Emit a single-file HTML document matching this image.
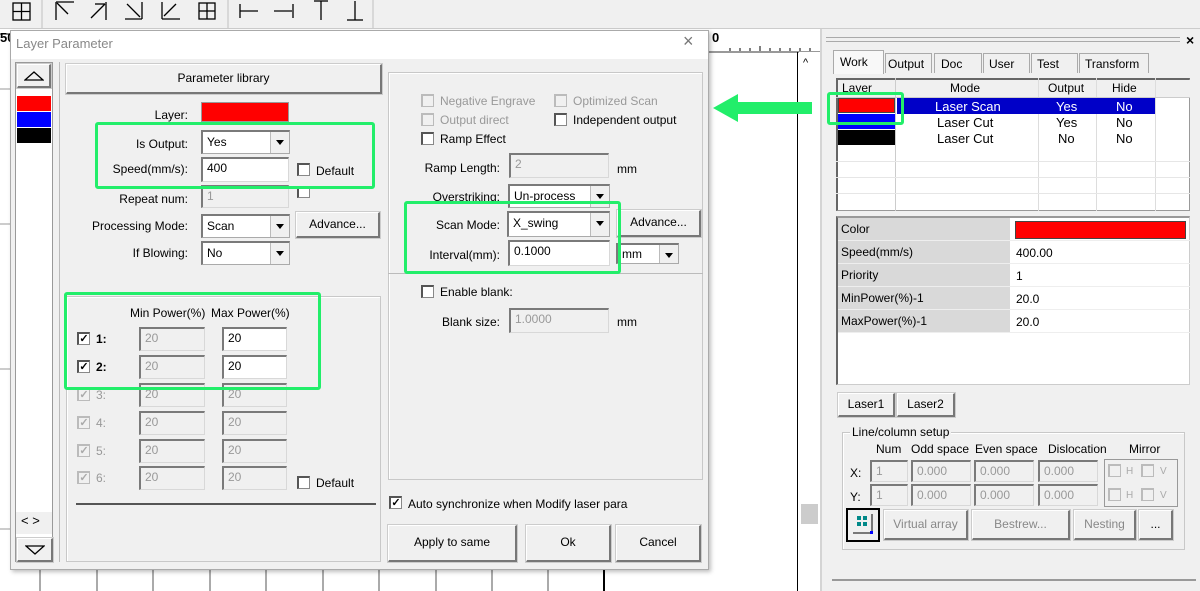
<!DOCTYPE html>
<html><head><meta charset="utf-8"><style>
*{box-sizing:border-box;margin:0;padding:0}
body{width:1200px;height:591px;overflow:hidden;position:relative;background:#fff;font-family:"Liberation Sans",sans-serif;font-size:12px;color:#000}
.a{position:absolute}
.t{position:absolute;white-space:nowrap;line-height:14px}
.r{text-align:right}
.in{position:absolute;background:#fff;border:1px solid #d8d8d8;border-top:2px solid #7a7a7a;border-left:2px solid #7a7a7a;padding:2px 4px;line-height:14px;white-space:nowrap}
.dis{background:#f0f0f0;color:#999}
.btn{position:absolute;background:#f0f0f0;border:1px solid #fff;border-right:2px solid #777;border-bottom:2px solid #777;text-align:center;white-space:nowrap;outline:1px solid #ccc}
.dd{position:absolute;background:#fff;border:1px solid #aaa;border-top:2px solid #7a7a7a;border-left:2px solid #7a7a7a;padding:2px 4px;line-height:16px}
.dd:after{content:"";position:absolute;right:0;top:0;bottom:0;width:18px;border-left:1px solid #bbb;background:#f0f0f0}
.dd i{position:absolute;right:5px;top:8px;width:0;height:0;border-left:4px solid transparent;border-right:4px solid transparent;border-top:5px solid #000;z-index:2}
.cb{position:absolute;width:13px;height:13px;background:#fff;border:1px solid #888;border-top:2px solid #555;border-left:2px solid #555;font-size:11px;line-height:10px;text-align:center;font-weight:bold}
.cbd{background:#f0f0f0;border-color:#bbb;color:#aaa}
.grn{position:absolute;border:3px solid #22ee6a;border-radius:3px}
.grp{position:absolute;border:1px solid #c8c8c8;box-shadow:1px 1px 0 #fff inset}
</style></head><body>
<!-- toolbar -->
<div class="a" style="left:0;top:0;width:1200px;height:29px;background:#f0f0f0;border-bottom:1px solid #ccc"></div>
<svg class="a" style="left:0;top:0" width="400" height="28" stroke="#000" fill="none" stroke-width="1.3">
<rect x="13" y="3" width="17" height="17"/><line x1="21.5" y1="3" x2="21.5" y2="20"/><line x1="13" y1="11.5" x2="30" y2="11.5"/>
<line x1="42" y1="0" x2="42" y2="28" stroke="#ccc"/>
<line x1="56" y1="2" x2="56" y2="20"/><line x1="56" y1="2" x2="74" y2="2"/><line x1="57" y1="3" x2="68" y2="14"/>
<line x1="91" y1="18" x2="105" y2="4"/><line x1="106" y1="2" x2="106" y2="20"/><line x1="95" y1="4" x2="105" y2="4"/>
<line x1="127" y1="4" x2="140" y2="17"/><line x1="142" y1="2" x2="142" y2="19"/><line x1="125" y1="19" x2="142" y2="19"/>
<line x1="176" y1="4" x2="164" y2="16"/><line x1="162" y1="2" x2="162" y2="19"/><line x1="162" y1="19" x2="180" y2="19"/>
<rect x="199" y="3" width="16" height="16"/><line x1="207" y1="3" x2="207" y2="19"/><line x1="199" y1="11" x2="215" y2="11"/>
<line x1="228" y1="0" x2="228" y2="28" stroke="#ccc"/>
<line x1="240" y1="4" x2="240" y2="18"/><line x1="240" y1="11" x2="258" y2="11"/>
<line x1="274" y1="11" x2="292" y2="11"/><line x1="293" y1="4" x2="293" y2="18"/>
<line x1="314" y1="1" x2="328" y2="1"/><line x1="321" y1="1" x2="321" y2="20"/>
<line x1="355" y1="1" x2="355" y2="20"/><line x1="347" y1="20" x2="363" y2="20"/>
<line x1="373" y1="0" x2="373" y2="28" stroke="#ccc"/>
</svg>
<!-- canvas grid -->
<svg class="a" style="left:0;top:29px" width="822" height="562" stroke="#999" stroke-width="1">
<line x1="0" y1="60" x2="10" y2="60"/><line x1="0" y1="195" x2="10" y2="195"/><line x1="0" y1="340" x2="10" y2="340"/><line x1="0" y1="500" x2="10" y2="500"/>
<g stroke="#555"><line x1="40" y1="540" x2="40" y2="562"/><line x1="97" y1="540" x2="97" y2="562"/><line x1="153" y1="540" x2="153" y2="562"/><line x1="210" y1="540" x2="210" y2="562"/><line x1="266" y1="540" x2="266" y2="562"/><line x1="323" y1="540" x2="323" y2="562"/><line x1="379" y1="540" x2="379" y2="562"/><line x1="436" y1="540" x2="436" y2="562"/><line x1="492" y1="540" x2="492" y2="562"/><line x1="548" y1="540" x2="548" y2="562"/></g>
<line x1="604" y1="540" x2="604" y2="562" stroke="#000" stroke-width="2"/>
<line x1="0" y1="5" x2="10" y2="5" stroke="#000"/>
<rect x="708" y="0" width="112" height="23" fill="#fff" stroke="none"/>
<line x1="708" y1="23" x2="820" y2="23" stroke="#333"/>
<g stroke="#000"><line x1="730" y1="19" x2="730" y2="22"/><line x1="740" y1="19" x2="740" y2="22"/><line x1="750" y1="19" x2="750" y2="22"/><line x1="760" y1="17" x2="760" y2="22"/><line x1="770" y1="19" x2="770" y2="22"/><line x1="780" y1="19" x2="780" y2="22"/><line x1="790" y1="19" x2="790" y2="22"/><line x1="800" y1="19" x2="800" y2="22"/><line x1="810" y1="19" x2="810" y2="22"/></g>
<line x1="797.5" y1="23" x2="797.5" y2="562" stroke="#000"/>
<rect x="799" y="23" width="21" height="539" fill="#fff" stroke="none"/>
<rect x="801" y="475" width="17" height="20" fill="#ccc" stroke="none"/>
<line x1="821" y1="0" x2="821" y2="562" stroke="#aaa"/>
</svg>
<div class="t" style="left:0;top:31px;font-weight:bold;font-size:13px">50</div>
<div class="t" style="left:712px;top:31px;font-weight:bold;font-size:13px">0</div>
<div class="t" style="left:803px;top:56px;font-size:11px">^</div>
<!-- dialog -->
<div class="a" style="left:10px;top:30px;width:699px;height:540px;background:#f0f0f0;border:1px solid #aaa;box-shadow:2px 2px 4px rgba(0,0,0,.25)"></div>
<div class="a" style="left:11px;top:31px;width:697px;height:28px;background:#fff"></div>
<div class="t" style="left:16px;top:37px;font-size:13px;color:#888">Layer Parameter</div>
<div class="t" style="left:683px;top:34px;font-size:18px;color:#777">×</div>
<!-- layer list -->
<div class="a" style="left:15px;top:62px;width:38px;height:500px;background:#fff;border:1px solid #999"></div>
<div class="btn" style="left:17px;top:64px;width:34px;height:24px"></div>
<svg class="a" style="left:24px;top:70px" width="20" height="12"><path d="M1 10 L10 2 L19 10 Z" fill="none" stroke="#000" stroke-width="1.3"/></svg>
<div class="a" style="left:17px;top:96px;width:34px;height:15px;background:#f00"></div>
<div class="a" style="left:17px;top:112px;width:34px;height:15px;background:#00f"></div>
<div class="a" style="left:17px;top:128px;width:34px;height:15px;background:#000"></div>
<div class="a" style="left:16px;top:512px;width:36px;height:22px;background:#f0f0f0"></div>
<div class="t" style="left:21px;top:514px;font-size:13px">&lt;&nbsp;&gt;</div>
<div class="btn" style="left:17px;top:538px;width:36px;height:24px"></div>
<svg class="a" style="left:25px;top:544px" width="20" height="12"><path d="M1 2 L10 10 L19 2 Z" fill="none" stroke="#000" stroke-width="1.3"/></svg>
<div class="a" style="left:59px;top:62px;width:1px;height:500px;background:#bbb"></div>
<!-- left content -->
<div class="btn" style="left:66px;top:64px;width:316px;height:30px;line-height:26px">Parameter library</div>
<div class="t r" style="left:80px;width:108px;top:108px">Layer:</div>
<div class="a" style="left:201px;top:102px;width:88px;height:20px;background:#f00;border:1px solid #999"></div>
<div class="t r" style="left:80px;width:108px;top:137px">Is Output:</div>
<div class="dd" style="left:201px;top:130px;width:89px;height:24px">Yes<i></i></div>
<div class="t r" style="left:80px;width:108px;top:162px">Speed(mm/s):</div>
<div class="in" style="left:201px;top:157px;width:88px;height:25px">400</div>
<div class="cb" style="left:297px;top:163px"></div>
<div class="t" style="left:316px;top:164px">Default</div>
<div class="t r" style="left:80px;width:108px;top:192px">Repeat num:</div>
<div class="in dis" style="left:201px;top:185px;width:88px;height:23px">1</div>
<div class="cb" style="left:297px;top:188px;height:10px;border-top:none"></div>
<div class="t r" style="left:60px;width:128px;top:219px">Processing Mode:</div>
<div class="dd" style="left:201px;top:214px;width:89px;height:24px">Scan<i></i></div>
<div class="btn" style="left:296px;top:212px;width:84px;height:26px;line-height:22px">Advance...</div>
<div class="t r" style="left:80px;width:108px;top:246px">If Blowing:</div>
<div class="dd" style="left:201px;top:241px;width:89px;height:24px">No<i></i></div>
<div class="grn" style="left:95px;top:122px;width:280px;height:67px"></div>
<!-- power group -->
<div class="grp" style="left:66px;top:296px;width:315px;height:266px"></div>
<div class="t" style="left:130px;top:306px">Min Power(%)</div>
<div class="t" style="left:211px;top:306px">Max Power(%)</div>
<div class="cb" style="left:77px;top:332px">✓</div><div class="t" style="left:96px;top:332px;font-weight:bold">1:</div>
<div class="in dis" style="left:139px;top:327px;width:66px;height:24px">20</div>
<div class="in" style="left:222px;top:327px;width:65px;height:24px">20</div>
<div class="cb" style="left:77px;top:360px">✓</div><div class="t" style="left:96px;top:360px;font-weight:bold">2:</div>
<div class="in dis" style="left:139px;top:355px;width:66px;height:24px">20</div>
<div class="in" style="left:222px;top:355px;width:65px;height:24px">20</div>
<div class="cb cbd" style="left:77px;top:388px">✓</div><div class="t" style="left:96px;top:388px;color:#999">3:</div>
<div class="in dis" style="left:139px;top:383px;width:66px;height:24px">20</div>
<div class="in dis" style="left:222px;top:383px;width:65px;height:24px">20</div>
<div class="cb cbd" style="left:77px;top:416px">✓</div><div class="t" style="left:96px;top:416px;color:#999">4:</div>
<div class="in dis" style="left:139px;top:411px;width:66px;height:24px">20</div>
<div class="in dis" style="left:222px;top:411px;width:65px;height:24px">20</div>
<div class="cb cbd" style="left:77px;top:444px">✓</div><div class="t" style="left:96px;top:444px;color:#999">5:</div>
<div class="in dis" style="left:139px;top:439px;width:66px;height:24px">20</div>
<div class="in dis" style="left:222px;top:439px;width:65px;height:24px">20</div>
<div class="cb cbd" style="left:77px;top:471px">✓</div><div class="t" style="left:96px;top:471px;color:#999">6:</div>
<div class="in dis" style="left:139px;top:466px;width:66px;height:24px">20</div>
<div class="in dis" style="left:222px;top:466px;width:65px;height:24px">20</div>
<div class="cb" style="left:297px;top:476px"></div><div class="t" style="left:316px;top:476px">Default</div>
<div class="a" style="left:76px;top:503px;width:300px;height:2px;background:#555"></div>
<div class="grn" style="left:64px;top:292px;width:257px;height:98px"></div>
<!-- right group -->
<div class="grp" style="left:388px;top:72px;width:315px;height:408px"></div>
<div class="cb cbd" style="left:421px;top:94px"></div><div class="t" style="left:440px;top:94px;color:#999">Negative Engrave</div>
<div class="cb cbd" style="left:554px;top:94px"></div><div class="t" style="left:573px;top:94px;color:#999">Optimized Scan</div>
<div class="cb cbd" style="left:421px;top:113px"></div><div class="t" style="left:440px;top:113px;color:#999">Output direct</div>
<div class="cb" style="left:554px;top:113px"></div><div class="t" style="left:573px;top:113px">Independent output</div>
<div class="cb" style="left:421px;top:132px"></div><div class="t" style="left:440px;top:132px">Ramp Effect</div>
<div class="t r" style="left:400px;width:100px;top:161px">Ramp Length:</div>
<div class="in dis" style="left:509px;top:153px;width:100px;height:25px">2</div>
<div class="t" style="left:617px;top:162px">mm</div>
<div class="t r" style="left:400px;width:100px;top:190px">Overstriking:</div>
<div class="dd" style="left:508px;top:184px;width:102px;height:24px">Un-process<i></i></div>
<div class="t r" style="left:400px;width:100px;top:218px">Scan Mode:</div>
<div class="dd" style="left:507px;top:211px;width:103px;height:26px">X_swing<i></i></div>
<div class="btn" style="left:617px;top:210px;width:84px;height:27px;line-height:23px">Advance...</div>
<div class="t r" style="left:400px;width:100px;top:248px">Interval(mm):</div>
<div class="in" style="left:508px;top:240px;width:102px;height:26px">0.1000</div>
<div class="dd" style="left:616px;top:243px;width:63px;height:21px;padding-top:1px">mm<i></i></div>
<div class="a" style="left:388px;top:273px;width:315px;height:1px;background:#bbb"></div>
<div class="grn" style="left:404px;top:201px;width:217px;height:73px"></div>
<div class="cb" style="left:421px;top:285px"></div><div class="t" style="left:440px;top:285px">Enable blank:</div>
<div class="t r" style="left:400px;width:100px;top:315px">Blank size:</div>
<div class="in dis" style="left:509px;top:308px;width:100px;height:25px">1.0000</div>
<div class="t" style="left:617px;top:315px">mm</div>
<div class="cb" style="left:389px;top:496px">✓</div><div class="t" style="left:408px;top:497px">Auto synchronize when Modify laser para</div>
<div class="btn" style="left:388px;top:525px;width:129px;height:37px;line-height:33px">Apply to same</div>
<div class="btn" style="left:526px;top:525px;width:85px;height:37px;line-height:33px">Ok</div>
<div class="btn" style="left:616px;top:525px;width:85px;height:37px;line-height:33px">Cancel</div>
<!-- arrow -->
<svg class="a" style="left:710px;top:88px" width="104" height="40"><path d="M3 20 L28 6 L28 14 L102 14 L102 26 L28 26 L28 34 Z" fill="#22ee6a"/></svg>
<!-- right panel -->
<div class="a" style="left:822px;top:29px;width:378px;height:562px;background:#f0f0f0"></div>
<div class="a" style="left:826px;top:37px;width:354px;height:5px;border-top:1px solid #aaa;border-bottom:1px solid #aaa"></div>
<div class="t" style="left:1186px;top:33px;font-size:14px;font-weight:bold">×</div>
<div class="a" style="left:833px;top:50px;width:51px;height:24px;background:#f8f8f8;border:1px solid #aaa;border-bottom:none"></div>
<div class="t" style="left:840px;top:55px">Work</div>
<div class="a" style="left:885px;top:53px;width:47px;height:20px;border:1px solid #aaa;border-bottom:none"></div><div class="t" style="left:888px;top:57px">Output</div>
<div class="a" style="left:934px;top:53px;width:48px;height:20px;border:1px solid #aaa;border-bottom:none"></div><div class="t" style="left:941px;top:57px">Doc</div>
<div class="a" style="left:983px;top:53px;width:47px;height:20px;border:1px solid #aaa;border-bottom:none"></div><div class="t" style="left:989px;top:57px">User</div>
<div class="a" style="left:1031px;top:53px;width:47px;height:20px;border:1px solid #aaa;border-bottom:none"></div><div class="t" style="left:1037px;top:57px">Test</div>
<div class="a" style="left:1079px;top:53px;width:70px;height:20px;border:1px solid #aaa;border-bottom:none"></div><div class="t" style="left:1085px;top:57px">Transform</div>
<!-- layer table -->
<div class="a" style="left:836px;top:78px;width:354px;height:133px;background:#fff;border:1px solid #999;border-left:2px solid #666;border-top:2px solid #666"></div>
<svg class="a" style="left:836px;top:78px" width="354" height="133" stroke="#e6e6e6">
<rect x="2" y="2" width="352" height="17" fill="#f0f0f0" stroke="none"/>
<line x1="59.5" y1="0" x2="59.5" y2="133" stroke="#ccc"/><line x1="202.5" y1="0" x2="202.5" y2="133" stroke="#ddd"/><line x1="260.5" y1="0" x2="260.5" y2="133" stroke="#ddd"/><line x1="319.5" y1="0" x2="319.5" y2="133" stroke="#ddd"/>
<line x1="0" y1="19.5" x2="354" y2="19.5" stroke="#ccc"/>
<line x1="0" y1="83.5" x2="354" y2="83.5"/><line x1="0" y1="99.5" x2="354" y2="99.5"/><line x1="0" y1="115.5" x2="354" y2="115.5"/>
</svg>
<div class="t" style="left:842px;top:81px">Layer</div>
<div class="t" style="left:950px;top:81px">Mode</div>
<div class="t" style="left:1048px;top:81px">Output</div>
<div class="t" style="left:1112px;top:81px">Hide</div>
<div class="a" style="left:838px;top:98px;width:57px;height:15px;background:#f00;border:1px solid #444"></div>
<div class="a" style="left:838px;top:114px;width:57px;height:15px;background:#00f"></div>
<div class="a" style="left:838px;top:130px;width:57px;height:15px;background:#000"></div>
<div class="a" style="left:897px;top:98px;width:258px;height:16px;background:#0000c8"></div>
<div class="t" style="left:935px;top:100px;color:#fff;font-size:13px">Laser Scan</div>
<div class="t" style="left:1056px;top:100px;color:#fff;font-size:13px">Yes</div>
<div class="t" style="left:1116px;top:100px;color:#fff;font-size:13px">No</div>
<div class="t" style="left:937px;top:116px;font-size:13px">Laser Cut</div>
<div class="t" style="left:1056px;top:116px;font-size:13px">Yes</div>
<div class="t" style="left:1116px;top:116px;font-size:13px">No</div>
<div class="t" style="left:937px;top:132px;font-size:13px">Laser Cut</div>
<div class="t" style="left:1058px;top:132px;font-size:13px">No</div>
<div class="t" style="left:1116px;top:132px;font-size:13px">No</div>
<div class="grn" style="left:827px;top:92px;width:77px;height:33px"></div>
<!-- property grid -->
<div class="a" style="left:836px;top:216px;width:354px;height:169px;background:#fff;border:1px solid #ccc;border-left:2px solid #666;border-top:2px solid #999"></div>
<div class="a" style="left:838px;top:218px;width:172px;height:114px;background:#d9d9d9"></div>
<div class="a" style="left:1015px;top:221px;width:171px;height:18px;background:#f00;border:1px solid #444"></div>
<div class="t" style="left:841px;top:222px">Color</div>
<div class="t" style="left:841px;top:245px">Speed(mm/s)</div><div class="t" style="left:1016px;top:246px">400.00</div>
<div class="t" style="left:841px;top:268px">Priority</div><div class="t" style="left:1016px;top:269px">1</div>
<div class="t" style="left:841px;top:291px">MinPower(%)-1</div><div class="t" style="left:1016px;top:292px">20.0</div>
<div class="t" style="left:841px;top:314px">MaxPower(%)-1</div><div class="t" style="left:1016px;top:315px">20.0</div>
<svg class="a" style="left:838px;top:218px" width="352" height="120" stroke="#eee"><line x1="0" y1="22.5" x2="352" y2="22.5"/><line x1="0" y1="45.5" x2="352" y2="45.5"/><line x1="0" y1="68.5" x2="352" y2="68.5"/><line x1="0" y1="91.5" x2="352" y2="91.5"/><line x1="0" y1="114.5" x2="352" y2="114.5"/></svg>
<div class="btn" style="left:838px;top:393px;width:57px;height:24px;line-height:20px">Laser1</div>
<div class="btn" style="left:897px;top:393px;width:58px;height:24px;line-height:20px">Laser2</div>
<div class="grp" style="left:842px;top:432px;width:343px;height:118px"></div>
<div class="t" style="left:850px;top:425px;background:#f0f0f0;padding:0 2px">Line/column setup</div>
<div class="t" style="left:876px;top:442px">Num</div>
<div class="t" style="left:911px;top:442px">Odd space</div>
<div class="t" style="left:975px;top:442px">Even space</div>
<div class="t" style="left:1048px;top:442px">Dislocation</div>
<div class="t" style="left:1129px;top:442px">Mirror</div>
<div class="t" style="left:850px;top:466px">X:</div><div class="t" style="left:850px;top:490px">Y:</div>
<div class="in dis" style="left:870px;top:460px;width:38px;height:22px">1</div>
<div class="in dis" style="left:911px;top:460px;width:60px;height:22px">0.000</div>
<div class="in dis" style="left:974px;top:460px;width:60px;height:22px">0.000</div>
<div class="in dis" style="left:1038px;top:460px;width:60px;height:22px">0.000</div>
<div class="in dis" style="left:870px;top:484px;width:38px;height:22px">1</div>
<div class="in dis" style="left:911px;top:484px;width:60px;height:22px">0.000</div>
<div class="in dis" style="left:974px;top:484px;width:60px;height:22px">0.000</div>
<div class="in dis" style="left:1038px;top:484px;width:60px;height:22px">0.000</div>
<div class="a" style="left:1104px;top:459px;width:74px;height:48px;border:1px solid #999"></div>
<div class="cb cbd" style="left:1108px;top:464px"></div><div class="t" style="left:1126px;top:465px;color:#aaa;font-size:10px">H</div>
<div class="cb cbd" style="left:1141px;top:464px"></div><div class="t" style="left:1160px;top:465px;color:#aaa;font-size:10px">V</div>
<div class="cb cbd" style="left:1108px;top:488px"></div><div class="t" style="left:1126px;top:489px;color:#aaa;font-size:10px">H</div>
<div class="cb cbd" style="left:1141px;top:488px"></div><div class="t" style="left:1160px;top:489px;color:#aaa;font-size:10px">V</div>
<div class="a" style="left:846px;top:508px;width:34px;height:34px;border:2px solid #000;background:#f0f0f0"></div>
<svg class="a" style="left:851px;top:513px" width="25" height="25"><rect x="6" y="3" width="4" height="4" fill="#088"/><rect x="12" y="3" width="4" height="4" fill="#088"/><rect x="6" y="9" width="4" height="4" fill="#088"/><rect x="12" y="9" width="4" height="4" fill="#088"/><path d="M21 1V20M2 20H21" stroke="#000" fill="none"/><rect x="19" y="18" width="3" height="3" fill="#00f"/></svg>
<div class="btn" style="left:884px;top:510px;width:84px;height:30px;line-height:26px;color:#888">Virtual array</div>
<div class="btn" style="left:972px;top:510px;width:98px;height:30px;line-height:26px;color:#888">Bestrew...</div>
<div class="btn" style="left:1074px;top:510px;width:62px;height:30px;line-height:26px;color:#888">Nesting</div>
<div class="btn" style="left:1139px;top:510px;width:34px;height:30px;line-height:26px">...</div>
<div class="a" style="left:832px;top:579px;width:364px;height:2px;background:#999"></div>
</body></html>
